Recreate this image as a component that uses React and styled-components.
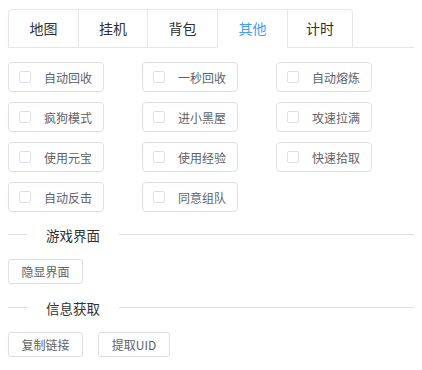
import React, { useState } from "react";
import styled, { createGlobalStyle } from "styled-components";

const Global = createGlobalStyle`
  html, body { margin: 0; padding: 0; background: #fff; }
  body {
    font-family: "Noto Sans CJK SC", "Liberation Sans", sans-serif;
    color: #606266;
  }
`;

const Page = styled.div`
  padding: 9px 8px 0 8px;
  width: 406px;
`;

const TabHeader = styled.div`
  display: flex;
  border-bottom: 1px solid #e4e7ed;
  margin-bottom: 14px;
`;

const TabNav = styled.div`
  display: flex;
  border: 1px solid #e4e7ed;
  border-bottom: none;
  border-radius: 4px 4px 0 0;
  margin-bottom: -1px;
`;

const TabItem = styled.div`
  box-sizing: border-box;
  height: 38px;
  line-height: 37px;
  padding: 0;
  font-size: 14px;
  white-space: nowrap;
  color: ${(p) => (p.$active ? "#409eff" : "#303133")};
  border-left: ${(p) => (p.$first ? "none" : "1px solid #e4e7ed")};
  border-bottom: 1px solid ${(p) => (p.$active ? "#fff" : "#e4e7ed")};
  width: ${(p) => p.$w}px;
  text-align: center;
  cursor: pointer;
`;

const CheckGrid = styled.div`
  display: grid;
  grid-template-columns: repeat(3, 96px);
  column-gap: 38px;
  row-gap: 10px;
`;

const CheckBox = styled.label`
  box-sizing: border-box;
  height: 30px;
  display: flex;
  align-items: center;
  border: 1px solid #dcdfe6;
  border-radius: 4px;
  padding: 0 10px;
  font-size: 12px;
  color: #606266;
  cursor: pointer;
  white-space: nowrap;
`;

const Square = styled.span`
  box-sizing: border-box;
  width: 12px;
  height: 12px;
  border: 1px solid #dcdfe6;
  border-radius: 2px;
  background: ${(p) => (p.$on ? "#409eff" : "#fff")};
  margin-right: 13px;
  flex: none;
`;

const Divider = styled.div`
  position: relative;
  height: 1px;
  background: #dcdfe6;
  margin: ${(p) => p.$m};
`;

const DividerText = styled.span`
  position: absolute;
  left: 19px;
  top: 50%;
  transform: translateY(-50%);
  background: #fff;
  padding: 0 19px;
  font-size: 13.5px;
  font-weight: 400;
  color: #303133;
  line-height: 20px;
  white-space: nowrap;
`;

const ButtonRow = styled.div`
  display: flex;
  gap: 15px;
`;

const Button = styled.button`
  box-sizing: border-box;
  height: 25px;
  width: ${(p) => p.$w}px;
  padding: 0;
  border: 1px solid #dcdfe6;
  border-radius: 3px;
  background: #fff;
  font-family: inherit;
  font-size: 12px;
  color: #606266;
  cursor: pointer;
  white-space: nowrap;
`;

const tabs = [
  ["地图", 69],
  ["挂机", 69],
  ["背包", 70],
  ["其他", 70],
  ["计时", 65],
];

const options = [
  "自动回收",
  "一秒回收",
  "自动熔炼",
  "疯狗模式",
  "进小黑屋",
  "攻速拉满",
  "使用元宝",
  "使用经验",
  "快速拾取",
  "自动反击",
  "同意组队",
];

export default function App() {
  const [active, setActive] = useState(3);
  const [checked, setChecked] = useState({});
  return (
    <Page>
      <Global />
      <TabHeader>
        <TabNav>
          {tabs.map(([t, w], i) => (
            <TabItem
              key={t}
              $w={w}
              $first={i === 0}
              $active={i === active}
              onClick={() => setActive(i)}
            >
              {t}
            </TabItem>
          ))}
        </TabNav>
      </TabHeader>
      <CheckGrid>
        {options.map((o) => (
          <CheckBox
            key={o}
            onClick={() => setChecked((c) => ({ ...c, [o]: !c[o] }))}
          >
            <Square $on={checked[o]} />
            {o}
          </CheckBox>
        ))}
      </CheckGrid>
      <Divider $m="22px 0 24px 0">
        <DividerText>游戏界面</DividerText>
      </Divider>
      <ButtonRow>
        <Button $w={75}>隐显界面</Button>
      </ButtonRow>
      <Divider $m="23px 0 24px 0">
        <DividerText>信息获取</DividerText>
      </Divider>
      <ButtonRow>
        <Button $w={75}>复制链接</Button>
        <Button $w={72}>提取UID</Button>
      </ButtonRow>
    </Page>
  );
}
